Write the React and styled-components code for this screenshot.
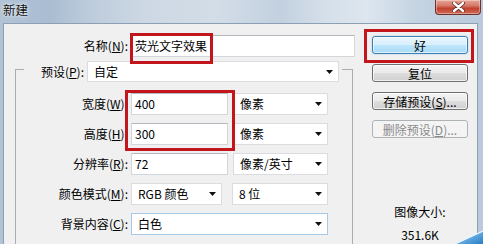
import React from "react";
import styled, { createGlobalStyle, css } from "styled-components";

const GlobalStyle = createGlobalStyle`
  html, body { margin: 0; padding: 0; }
  body { background: #c4d3e2; }
  #root { width: 483px; height: 244px; overflow: hidden; }
`;

const Window = styled.div`
  position: relative;
  width: 483px;
  height: 244px;
  display: flex;
  flex-direction: column;
  overflow: hidden;
  font-family: "Noto Sans CJK SC", "Noto Sans", sans-serif;
  font-size: 12px;
  color: #000;
  background: linear-gradient(
    90deg,
    #b2c3d6 0%,
    #a9bcd1 10%,
    #bccbdb 18%,
    #cdd8e4 30%,
    #d3dde8 45%,
    #c2d0df 58%,
    #d6e0ea 68%,
    #dde6ef 76%,
    #c5d4e3 86%,
    #b9cadc 100%
  );
`;

const TitleBar = styled.div`
  flex: none;
  height: 23px;
  display: flex;
  justify-content: space-between;
  align-items: flex-start;
  padding-left: 3px;
`;

const Title = styled.div`
  padding-top: 1px;
  font-size: 12.5px;
  line-height: 17px;
  color: #101010;
  text-shadow: 0 0 5px rgba(255, 255, 255, 0.9), 0 0 2px rgba(255, 255, 255, 0.8);
`;

const CloseButton = styled.div`
  width: 46px;
  height: 15px;
  margin-right: 2px;
  box-sizing: border-box;
  border: 1px solid #6e322c;
  border-top: none;
  border-radius: 0 0 4px 4px;
  background: linear-gradient(#e7a596 0%, #d67a69 40%, #c2412f 60%, #cf6b58 100%);
  box-shadow: inset 0 0 0 1px rgba(255, 255, 255, 0.35);
  display: flex;
  align-items: center;
  justify-content: center;
`;

const Client = styled.div`
  flex: 1;
  min-height: 0;
  display: flex;
  margin: 0 5px 0 3px;
  background: #f0f0f0;
  border: 1px solid #8c9fb4;
  border-bottom: none;
`;

const LeftPane = styled.div`
  flex: none;
  width: 352px;
  display: flex;
  flex-direction: column;
  padding-top: 11px;
`;

const NameRow = styled.div`
  display: flex;
  align-items: center;
  gap: 3px;
`;

const Label = styled.div`
  flex: none;
  width: ${(p) => p.$w}px;
  text-align: right;
  line-height: 16px;
  white-space: nowrap;
  color: #000;
`;

const TextBox = styled.div`
  position: relative;
  flex: none;
  width: ${(p) => p.$w}px;
  height: 22px;
  box-sizing: border-box;
  display: flex;
  align-items: center;
  padding: 0 3px;
  background: #fff;
  border: 1px solid #d3d7dc;
  border-top-color: #b4b8be;
  line-height: 16px;
  white-space: nowrap;
`;

const Group = styled.fieldset`
  flex: 1;
  min-width: 0;
  width: 338px;
  box-sizing: border-box;
  margin: -1px 0 0 11px;
  padding: 0;
  border: 1px solid #a9aeb4;
  border-bottom: none;
`;

const Legend = styled.legend`
  margin-left: 8px;
  padding: 5px 3px 0 12px;
`;

const LegendRow = styled.div`
  display: flex;
  align-items: center;
  gap: 3px;
`;

const Rows = styled.div`
  position: relative;
  display: grid;
  row-gap: 8px;
  padding-top: 11px;
`;

const FormRow = styled.div`
  display: flex;
  align-items: center;
  gap: 3px;
`;

const SelectBox = styled.div`
  flex: none;
  width: ${(p) => p.$w}px;
  height: ${(p) => p.$h || 22}px;
  margin-left: ${(p) => p.$ml || 0}px;
  box-sizing: border-box;
  display: flex;
  align-items: center;
  justify-content: space-between;
  padding: 0 5px 0 6px;
  background: #fff;
  border: 1px solid ${(p) => (p.$hot ? "#a7c9ea" : "#dadcdf")};
  line-height: 16px;
  white-space: nowrap;
`;

const RightPane = styled.div`
  flex: 1;
  display: flex;
  flex-direction: column;
  padding: 12px 0 0 16px;
`;

const ButtonList = styled.div`
  display: flex;
  flex-direction: column;
  gap: 10px;
  width: 96px;
`;

const ButtonSlot = styled.div`
  position: relative;
  height: 18px;
`;

const Btn = styled.button`
  display: block;
  width: 96px;
  height: 18px;
  box-sizing: border-box;
  padding: 0;
  margin: 0;
  font-family: inherit;
  font-size: 12px;
  line-height: 15px;
  border-radius: 3px;
  color: #000;
  border: 1px solid #707070;
  background: linear-gradient(#f3f3f3 0%, #ebebeb 48%, #dddddd 52%, #cfcfcf 100%);
  box-shadow: inset 0 0 0 1px rgba(255, 255, 255, 0.7);
  ${(p) =>
    p.$variant === "default" &&
    css`
      border-color: #3c7fb1;
      background: linear-gradient(#e9f6fd 0%, #d8effc 48%, #bde5fb 52%, #a9daf5 100%);
      box-shadow: inset 0 0 0 1px rgba(255, 255, 255, 0.6), 0 0 2px rgba(90, 170, 230, 0.5);
    `}
  ${(p) =>
    p.$variant === "disabled" &&
    css`
      color: #8a8a8a;
      border-color: #adb2b5;
      background: #f4f4f4;
      box-shadow: none;
    `}
`;

const Info = styled.div`
  width: 96px;
  text-align: center;
  line-height: 16px;
  margin-top: ${(p) => p.$mt}px;
  color: #000;
`;

const Annotation = styled.div`
  position: absolute;
  left: ${(p) => p.$x}px;
  top: ${(p) => p.$y}px;
  width: ${(p) => p.$w}px;
  height: ${(p) => p.$h}px;
  box-sizing: border-box;
  border: 3px solid #c3161c;
  pointer-events: none;
  z-index: 2;
`;

const Swoosh = styled.svg`
  position: absolute;
  right: 0;
  bottom: 0;
`;

const Arrow = () => (
  <svg width="7" height="4" viewBox="0 0 7 4">
    <polygon points="0,0 7,0 3.5,4" fill="#111" />
  </svg>
);

const CloseIcon = () => (
  <svg width="13" height="10" viewBox="0 0 13 10">
    <path d="M2 1 L11 9 M11 1 L2 9" stroke="#5a2a26" strokeWidth="4" strokeLinecap="round" />
    <path d="M2 1 L11 9 M11 1 L2 9" stroke="#ffffff" strokeWidth="2.4" strokeLinecap="round" />
  </svg>
);

const Select = ({ w, ml, hot, children }) => (
  <SelectBox $w={w} $ml={ml} $hot={hot}>
    <span>{children}</span>
    <Arrow />
  </SelectBox>
);

const Mn = ({ label, k }) => (
  <>
    {label}(<u>{k}</u>):
  </>
);

export default function App() {
  return (
    <>
      <GlobalStyle />
      <Window>
        <TitleBar>
          <Title>新建</Title>
          <CloseButton>
            <CloseIcon />
          </CloseButton>
        </TitleBar>
        <Client>
          <LeftPane>
            <NameRow>
              <Label $w={124}>
                <Mn label="名称" k="N" />
              </Label>
              <TextBox $w={224}>
                荧光文字效果
                <Annotation $x={-2} $y={-3} $w={83} $h={31} />
              </TextBox>
            </NameRow>
            <Group>
              <Legend>
                <LegendRow>
                  <Label $w={48}>
                    <Mn label="预设" k="P" />
                  </Label>
                  <SelectBox $w={252} $h={21}>
                    <span>自定</span>
                    <Arrow />
                  </SelectBox>
                </LegendRow>
              </Legend>
              <Rows>
                <Annotation $x={109} $y={8} $w={110} $h={61} />
                <FormRow>
                  <Label $w={112}>
                    <Mn label="宽度" k="W" />
                  </Label>
                  <TextBox $w={97}>400</TextBox>
                  <Select w={95} ml={2}>像素</Select>
                </FormRow>
                <FormRow>
                  <Label $w={112}>
                    <Mn label="高度" k="H" />
                  </Label>
                  <TextBox $w={97}>300</TextBox>
                  <Select w={95} ml={2}>像素</Select>
                </FormRow>
                <FormRow>
                  <Label $w={112}>
                    <Mn label="分辨率" k="R" />
                  </Label>
                  <TextBox $w={97}>72</TextBox>
                  <Select w={95} ml={2}>像素/英寸</Select>
                </FormRow>
                <FormRow>
                  <Label $w={112}>
                    <Mn label="颜色模式" k="M" />
                  </Label>
                  <Select w={91}>RGB 颜色</Select>
                  <Select w={96} ml={7}>8 位</Select>
                </FormRow>
                <FormRow>
                  <Label $w={112}>
                    <Mn label="背景内容" k="C" />
                  </Label>
                  <Select w={197} hot>白色</Select>
                </FormRow>
              </Rows>
            </Group>
          </LeftPane>
          <RightPane>
            <ButtonList>
              <ButtonSlot>
                <Btn $variant="default">好</Btn>
                <Annotation $x={-8} $y={-7} $w={110} $h={34} />
              </ButtonSlot>
              <ButtonSlot>
                <Btn>复位</Btn>
              </ButtonSlot>
              <ButtonSlot>
                <Btn>
                  存储预设(<u>S</u>)...
                </Btn>
              </ButtonSlot>
              <ButtonSlot>
                <Btn $variant="disabled" disabled>
                  删除预设(<u>D</u>)...
                </Btn>
              </ButtonSlot>
            </ButtonList>
            <Info $mt={66}>图像大小:</Info>
            <Info $mt={7}>351.6K</Info>
          </RightPane>
        </Client>
        <Swoosh width="28" height="14" viewBox="0 0 28 14">
          <defs>
            <linearGradient id="sw" x1="0" y1="0" x2="1" y2="1">
              <stop offset="0" stopColor="#d6f0fb" />
              <stop offset="0.4" stopColor="#6fb6e6" />
              <stop offset="1" stopColor="#2a7cc4" />
            </linearGradient>
          </defs>
          <path d="M0 14 Q13 8 28 1 L28 14 Z" fill="url(#sw)" />
          <path d="M0 14 Q13 8 28 1" fill="none" stroke="#eaf8ff" strokeWidth="1.2" />
        </Swoosh>
      </Window>
    </>
  );
}
